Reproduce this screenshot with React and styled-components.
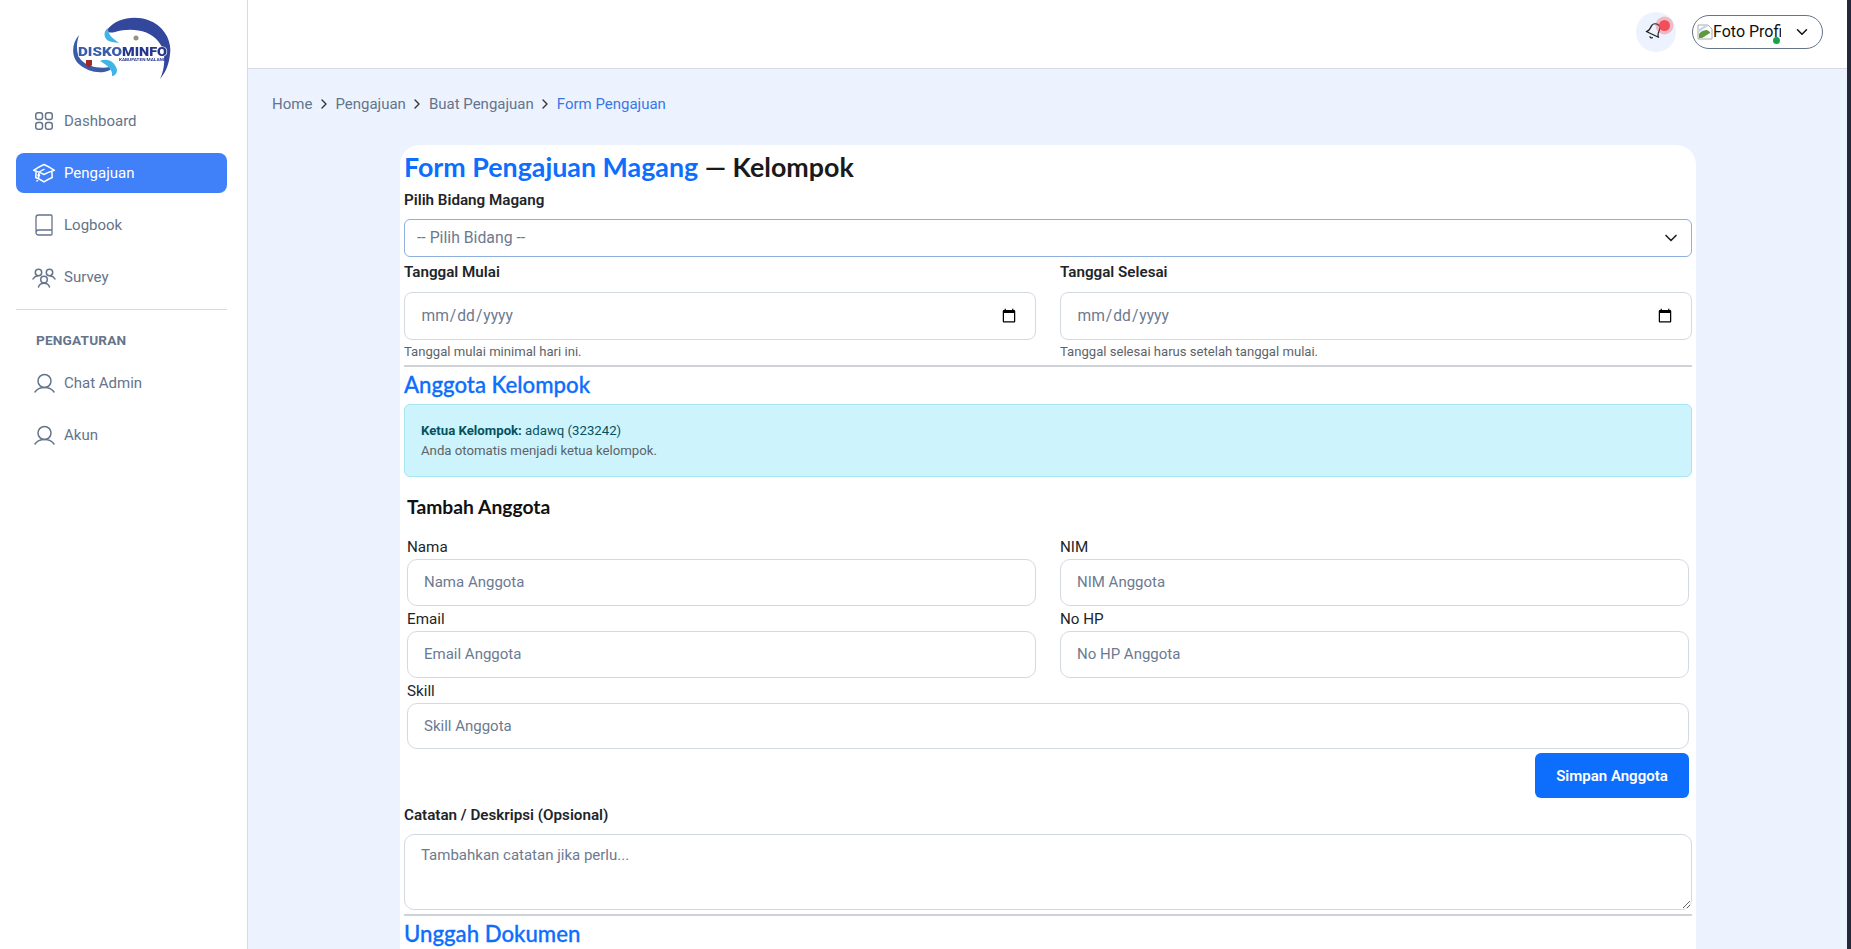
import React from "react";
import styled, { createGlobalStyle } from "styled-components";
import { LuBell, LuBook, LuChevronDown, LuChevronRight } from "react-icons/lu";
import { HiOutlineAcademicCap, HiOutlineSquares2X2 } from "react-icons/hi2";

const Global = createGlobalStyle`
  * { box-sizing: border-box; }
  html, body { margin: 0; height: 100%; overflow: hidden; }
  body { font-family: Roboto, "Liberation Sans", sans-serif; background: #fff; }
  ::placeholder { color: #6c7a91; opacity: 1; }
`;

const HEADING = `Lato, "Noto Sans", sans-serif`;

const Page = styled.div`
  width: 1851px;
  height: 949px;
  display: flex;
  overflow: hidden;
  border-right: 4px solid #24283a;
`;

const Sidebar = styled.aside`
  width: 248px;
  flex: none;
  background: #fff;
  border-right: 1px solid #d5dbe6;
  padding: 16px 20px 0 16px;
`;

const LogoBox = styled.div`
  height: 72px;
  margin: 0 0 13px 53px;
  svg { display: block; filter: blur(0.3px); }
`;

const Nav = styled.nav`
  display: flex;
  flex-direction: column;
  gap: 12px;
`;

const NavItem = styled.a`
  height: 40px;
  display: flex;
  align-items: center;
  gap: 8px;
  padding: 0 16px;
  border-radius: 8px;
  font-size: 15px;
  color: ${(p) => (p.$active ? "#fff" : "#64748b")};
  background: ${(p) => (p.$active ? "#4080f8" : "transparent")};
  svg { flex: none; font-size: 24px; stroke-width: 1.5; }
`;

const BookIcon = styled(LuBook)`
  && { stroke-width: 1.3; }
`;

const Divider = styled.div`
  height: 1px;
  background: #d5dbe6;
  margin: 12px 0 0;
`;

const NavHeading = styled.div`
  font-size: 13.6px;
  font-weight: 700;
  letter-spacing: 0.2px;
  color: #64748b;
  padding: 22px 20px 15px;
  line-height: 16px;
`;

const Right = styled.div`
  flex: 1;
  min-width: 0;
  display: flex;
  flex-direction: column;
  background: #ecf3ff;
`;

const Topbar = styled.header`
  height: 69px;
  flex: none;
  background: #fff;
  border-bottom: 1px solid #d5dbe6;
  display: flex;
  align-items: center;
  justify-content: flex-end;
  gap: 16px;
  padding: 0 24px 5px 0;
`;

const BellButton = styled.div`
  position: relative;
  width: 40px;
  height: 40px;
  border-radius: 50%;
  background: #ecf3ff;
  display: flex;
  align-items: center;
  justify-content: center;
  color: #222;
  svg { transform: rotate(25deg); stroke-width: 1.7; margin: -1px 4px 0 0; }
`;

const Ping = styled.span`
  position: absolute;
  top: 8px;
  right: 6px;
  width: 11px;
  height: 11px;
  border-radius: 50%;
  background: #f0505a;
  box-shadow: 0 0 0 3.5px rgba(240, 80, 90, 0.35);
`;

const ProfilePill = styled.div`
  position: relative;
  width: 131px;
  height: 34px;
  border: 1px solid #64748b;
  border-radius: 17px;
  display: flex;
  align-items: center;
  padding: 0 11px 0 4px;
  justify-content: space-between;
  color: #111;
`;

const BrokenPicture = styled.div`
  width: 84px;
  overflow: hidden;
  white-space: nowrap;
  display: flex;
  align-items: center;
  font-size: 16px;
  svg { flex: none; }
`;

const OnlineDot = styled.span`
  position: absolute;
  left: 80px;
  top: 21px;
  width: 7px;
  height: 7px;
  border-radius: 50%;
  background: #16a34a;
`;

const Content = styled.main`
  flex: 1;
  min-height: 0;
  overflow: hidden;
  padding: 25px 24px 0;
`;

const Crumbs = styled.div`
  display: flex;
  align-items: center;
  gap: 3.5px;
  height: 20px;
  font-size: 15px;
  color: #64748b;
  svg { color: #333; font-size: 16px; }
`;

const CrumbCurrent = styled.span`
  color: #3b76e8;
`;

const Card = styled.section`
  width: 1296px;
  margin: 31px 0 0 128px;
  background: #fff;
  border-radius: 20px 20px 0 0;
  padding: 4px 4px 60px;
`;

const Title = styled.h1`
  margin: 0 0 5px;
  font-family: ${HEADING};
  font-weight: 700;
  font-size: 26.8px;
  line-height: 36px;
  color: #1a1a1a;
  span { color: #0d6efd; }
`;

const FieldLabel = styled.label`
  display: block;
  font-size: 15.2px;
  font-weight: 600;
  color: #212529;
  line-height: 20px;
  margin-top: ${(p) => p.$top || 0}px;
  margin-bottom: ${(p) => p.$gap || 9}px;
`;

const SelectWrap = styled.div`
  position: relative;
  margin-bottom: 5px;
  svg {
    position: absolute;
    top: 9px;
    right: 11px;
    font-size: 20px;
    color: #222;
    pointer-events: none;
  }
`;

const SelectBox = styled.select`
  display: block;
  width: 100%;
  height: 38px;
  appearance: none;
  background: #fff;
  border: 1px solid #8fb0df;
  border-radius: 6px;
  padding: 0 36px 1px 12px;
  font-family: inherit;
  font-size: 15.8px;
  color: #6c7a91;
  outline: none;
`;

const Columns = styled.div`
  display: grid;
  grid-template-columns: 1fr 1fr;
  column-gap: 24px;
`;

const DateBox = styled.input`
  display: block;
  width: 100%;
  height: 48px;
  border: 1px solid #d3d9e3;
  border-radius: 8px;
  padding: 0 16px 0 15.5px;
  background: #fff;
  font-family: inherit;
  font-size: 15.6px;
  color: #6c7a91;
  outline: none;
`;

const Help = styled.small`
  display: block;
  font-size: 13.1px;
  line-height: 18px;
  margin-top: 3px;
  color: #5c636a;
`;

const Rule = styled.hr`
  border: 0;
  height: 1.5px;
  background: #cfd2d6;
  margin: ${(p) => p.$top}px 0 0;
`;

const SectionTitle = styled.h2`
  margin: 2px 0 0;
  font-family: ${HEADING};
  font-weight: 500;
  font-size: 22.2px;
  line-height: 32px;
  color: #0d6efd;
  -webkit-text-stroke: 0.3px currentColor;
`;

const Alert = styled.div`
  height: 73px;
  margin-top: 3px;
  background: #cdf4fc;
  border: 1px solid #a4e6f4;
  border-radius: 6px;
  padding: 16px 16px;
  font-size: 13.2px;
  line-height: 20px;
  color: #055160;
  b { font-weight: 700; }
`;

const AlertNote = styled.div`
  color: #5c636a;
`;

const MemberForm = styled.div`
  padding: 0 3px;
`;

const MemberTitle = styled.h3`
  margin: 17px 0 18.5px;
  font-family: ${HEADING};
  font-weight: 700;
  font-size: 19.3px;
  line-height: 26px;
  color: #111;
`;

const MemberLabel = styled.label`
  display: block;
  font-size: 15.2px;
  line-height: 19px;
  color: #212529;
  margin-bottom: 2px;
`;

const MemberCell = styled.div`
  margin-bottom: 4px;
`;

const TextBox = styled.input`
  display: block;
  width: 100%;
  height: 46.8px;
  border: 1px solid #d3d9e3;
  border-radius: 10px;
  padding: 0 16px;
  background: #fff;
  font-family: inherit;
  font-size: 15px;
  outline: none;
`;

const ButtonRow = styled.div`
  display: flex;
  justify-content: flex-end;
  margin-top: 0.5px;
`;

const SaveButton = styled.button`
  width: 154px;
  height: 45px;
  border: 0;
  border-radius: 6px;
  background: #0d6efd;
  color: #fff;
  font-family: inherit;
  font-size: 15px;
  font-weight: 600;
`;

const NotesBox = styled.textarea`
  display: block;
  width: 100%;
  height: 76px;
  border: 1px solid #d3d9e3;
  border-radius: 10px;
  padding: 11px 16px;
  font-family: inherit;
  font-size: 15px;
  outline: none;
`;

const NavIcon = ({ children }) => (
  <svg width="1em" height="1em" viewBox="0 0 24 24" fill="none" stroke="currentColor" strokeLinecap="round">
    {children}
  </svg>
);

const PersonIcon = () => (
  <NavIcon>
    <circle cx="12.5" cy="10" r="6.5" />
    <path d="M3 21c2-3 5-4.500 9.500-4.500S20 18 22 21" />
  </NavIcon>
);

const GroupIcon = () => (
  <NavIcon>
    <circle cx="6.500" cy="7.500" r="3.200" />
    <circle cx="17.500" cy="7.500" r="3.200" />
    <circle cx="12" cy="14.500" r="3.300" />
    <path d="M6.500 22c.8-2.600 3-3.800 5.500-3.800s4.700 1.200 5.500 3.800" />
    <path d="M1 14c.9-1.800 2.500-2.800 4.500-3" />
    <path d="M23 14c-.9-1.800-2.500-2.800-4.500-3" />
  </NavIcon>
);

const BrokenImageIcon = () => (
  <svg width="16" height="16" viewBox="0 0 16 16">
    <path d="M1 1h10l4 4v10H1z" fill="#fff" stroke="#aaa" />
    <path d="M2 14V10c2-3 5-4 8-4l3 2v1L5 14z" fill="#5e9b3f" />
    <path d="M2 5l5-3h4L2 8z" fill="#c3d5f2" />
  </svg>
);

// viewBox uses page coordinates so the logo parts can be read off the screenshot
const Logo = () => (
  <svg width="110" height="72" viewBox="69 16 110 72">
    <path d="M107 30C115 18 135 15 148 20C165 26 172 42 170 54C169 64 166 72 160 79C166 66 166 50 158 41C150 30 130 27 115 32C111 33 108 33 107 30z" fill="#33479c" />
    <path d="M108 28C102 32 104 41 112 42L119 43C114 39 108 36 108 28z" fill="#3fb4e6" />
    <path d="M79 35C71 44 71 58 80 65C87 71 100 75 110 70L110 67C100 69 88 67 81 60C76 54 76 44 79 35z" fill="#3a5ca8" />
    <path d="M100 61C108 57 116 63 117 70C117 74 114 76 112 76C113 70 108 66 100 61z" fill="#3fb4e6" />
    <circle cx="136" cy="38" r="2.500" fill="#9a8f80" />
    <path d="M86 60h6v5l-3 3-3-3z" fill="#9c2a2a" />
    <g fontFamily="Roboto, sans-serif" fontWeight="900" stroke="#fff" strokeWidth="1.2" paintOrder="stroke">
      <text x="78" y="56" fontSize="13.500" fill="#3a5ca8" textLength="44" lengthAdjust="spacingAndGlyphs">DISKO</text>
      <text x="122" y="56" fontSize="13.500" fill="#27378c" textLength="45" lengthAdjust="spacingAndGlyphs">MINFO</text>
    </g>
    <text x="119" y="61" fontFamily="Roboto, sans-serif" fontSize="3.500" fontWeight="700" fill="#27378c" textLength="47" lengthAdjust="spacingAndGlyphs">KABUPATEN MALANG</text>
  </svg>
);

export default function App() {
  return (
    <Page>
      <Global />
      <Sidebar>
        <LogoBox>
          <Logo />
        </LogoBox>
        <Nav>
          <NavItem><HiOutlineSquares2X2 />Dashboard</NavItem>
          <NavItem $active><HiOutlineAcademicCap />Pengajuan</NavItem>
          <NavItem><BookIcon />Logbook</NavItem>
          <NavItem><GroupIcon />Survey</NavItem>
        </Nav>
        <Divider />
        <NavHeading>PENGATURAN</NavHeading>
        <Nav>
          <NavItem><PersonIcon />Chat Admin</NavItem>
          <NavItem><PersonIcon />Akun</NavItem>
        </Nav>
      </Sidebar>
      <Right>
        <Topbar>
          <BellButton>
            <LuBell size={18} />
            <Ping />
          </BellButton>
          <ProfilePill>
            <BrokenPicture><BrokenImageIcon />Foto Profil</BrokenPicture>
            <OnlineDot />
            <LuChevronDown size={18} />
          </ProfilePill>
        </Topbar>
        <Content>
          <Crumbs>
            <span>Home</span><LuChevronRight />
            <span>Pengajuan</span><LuChevronRight />
            <span>Buat Pengajuan</span><LuChevronRight />
            <CrumbCurrent>Form Pengajuan</CrumbCurrent>
          </Crumbs>
          <Card>
            <Title><span>Form Pengajuan Magang</span> — Kelompok</Title>
            <FieldLabel>Pilih Bidang Magang</FieldLabel>
            <SelectWrap>
              <SelectBox defaultValue="">
                <option value="">-- Pilih Bidang --</option>
              </SelectBox>
              <LuChevronDown />
            </SelectWrap>
            <Columns>
              <div>
                <FieldLabel $gap={10}>Tanggal Mulai</FieldLabel>
                <DateBox type="date" />
                <Help>Tanggal mulai minimal hari ini.</Help>
              </div>
              <div>
                <FieldLabel $gap={10}>Tanggal Selesai</FieldLabel>
                <DateBox type="date" />
                <Help>Tanggal selesai harus setelah tanggal mulai.</Help>
              </div>
            </Columns>
            <Rule $top={4} />
            <SectionTitle>Anggota Kelompok</SectionTitle>
            <Alert>
              <div><b>Ketua Kelompok:</b> adawq (323242)</div>
              <AlertNote>Anda otomatis menjadi ketua kelompok.</AlertNote>
            </Alert>
            <MemberForm>
              <MemberTitle>Tambah Anggota</MemberTitle>
              <Columns>
                <MemberCell>
                  <MemberLabel>Nama</MemberLabel>
                  <TextBox placeholder="Nama Anggota" />
                </MemberCell>
                <MemberCell>
                  <MemberLabel>NIM</MemberLabel>
                  <TextBox placeholder="NIM Anggota" />
                </MemberCell>
                <MemberCell>
                  <MemberLabel>Email</MemberLabel>
                  <TextBox placeholder="Email Anggota" />
                </MemberCell>
                <MemberCell>
                  <MemberLabel>No HP</MemberLabel>
                  <TextBox placeholder="No HP Anggota" />
                </MemberCell>
              </Columns>
              <MemberCell>
                <MemberLabel>Skill</MemberLabel>
                <TextBox placeholder="Skill Anggota" />
              </MemberCell>
              <ButtonRow><SaveButton>Simpan Anggota</SaveButton></ButtonRow>
            </MemberForm>
            <FieldLabel $top={7}>Catatan / Deskripsi (Opsional)</FieldLabel>
            <NotesBox placeholder="Tambahkan catatan jika perlu..." />
            <Rule $top={4} />
            <SectionTitle>Unggah Dokumen</SectionTitle>
          </Card>
        </Content>
      </Right>
    </Page>
  );
}
